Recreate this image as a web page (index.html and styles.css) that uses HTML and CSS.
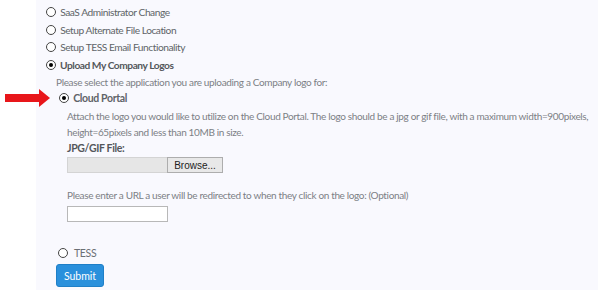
FILE: index.html
```html
<!DOCTYPE html>
<html lang="en">
<head>
    <meta charset="UTF-8">
    <title>Company Logos</title>
    <link rel="stylesheet" href="styles.css">
</head>
<body>
    <div class="panel">
        <ul class="options">
            <li><label><input type="radio" name="task"> SaaS Administrator Change</label></li>
            <li><label><input type="radio" name="task"> Setup Alternate File Location</label></li>
            <li><label><input type="radio" name="task"> Setup TESS Email Functionality</label></li>
            <li class="strong"><label><input type="radio" name="task" checked> Upload My Company Logos</label></li>
        </ul>
        <div class="logos">
            <p class="hint">Please select the application you are uploading a Company logo for:</p>
            <div class="app">
                <span class="arrow"></span>
                <label class="app-label"><input type="radio" name="app" checked> Cloud Portal</label>
            </div>
            <div class="details">
                <p class="text">Attach the logo you would like to utilize on the Cloud Portal. The logo should be a jpg or gif file, with a maximum width=900pixels, height=65pixels and less than 10MB in size.</p>
                <p class="field-title">JPG/GIF File:</p>
                <div class="file">
                    <span class="file-name"></span>
                    <button class="browse">Browse...</button>
                </div>
                <p class="text url-hint">Please enter a URL a user will be redirected to when they click on the logo: (Optional)</p>
                <input type="text" class="url">
            </div>
            <label class="app-label tess"><input type="radio" name="app"> TESS</label>
            <button class="submit">Submit</button>
        </div>
    </div>
</body>
</html>
```

FILE: styles.css
```css
body {
    margin: 0;
    background: #fff;
    font-family: 'Lato', 'Liberation Sans', sans-serif;
    font-size: 10px;
    letter-spacing: -0.35px;
    color: #6b6f74;
}
.panel {
    margin-left: 36px;
    width: 562px;
    height: 290px;
    background: #f9f9fe;
    box-sizing: border-box;
    padding-top: 4px;
}
.options {
    list-style: none;
    margin: 0;
    padding: 0 0 0 10px;
}
.options li {
    height: 17.5px;
    line-height: 17px;
    font-size: 10.2px;
    letter-spacing: -0.45px;
    color: #606468;
}
.options li.strong {
    font-weight: bold;
    color: #54575b;
}
input[type="radio"] {
    appearance: none;
    width: 10px;
    height: 10px;
    margin: 0 2px 0 0;
    border: 1px solid #444;
    border-radius: 50%;
    background: #fff;
    box-sizing: border-box;
    vertical-align: -1px;
    position: relative;
}
input[type="radio"]:checked::after {
    content: '';
    position: absolute;
    left: 2px;
    top: 2px;
    width: 4px;
    height: 4px;
    border-radius: 50%;
    background: #000;
}
.logos {
    padding-left: 20px;
}
.hint {
    margin: 1px 0 0;
    line-height: 14px;
    color: #7c8085;
}
.app {
    position: relative;
    padding-left: 3px;
    height: 18px;
    line-height: 18px;
}
.arrow {
    position: absolute;
    left: -51px;
    top: 0;
    width: 45px;
    height: 18px;
}
.arrow::before {
    content: '';
    position: absolute;
    left: 0;
    top: 5px;
    width: 35px;
    height: 8px;
    background: #e8161a;
}
.arrow::after {
    content: '';
    position: absolute;
    left: 34px;
    top: 0;
    border-left: 11px solid #e8161a;
    border-top: 9px solid transparent;
    border-bottom: 9px solid transparent;
}
.app-label {
    font-size: 10.5px;
    font-weight: bold;
    color: #5f6368;
}
.details {
    padding-left: 11px;
    padding-top: 1px;
}
.text {
    margin: 0;
    line-height: 16px;
    color: #7c8085;
}
.field-title {
    margin: 0;
    font-size: 10.5px;
    line-height: 16px;
    font-weight: bold;
    color: #54575b;
}
.file {
    display: flex;
    margin-top: 1px;
    height: 16px;
}
.file-name {
    width: 100px;
    background: #e6e6e6;
    border: 1px solid #d4d4d4;
    border-right: none;
    box-sizing: border-box;
}
.browse {
    width: 56px;
    height: 16px;
    padding: 0;
    border: 1px solid #adadad;
    background: #e8e8e8;
    font-family: 'Liberation Sans', sans-serif;
    font-size: 10px;
    letter-spacing: 0;
    color: #222;
}
.url-hint {
    margin-top: 14px;
    margin-bottom: 3px;
}
.url {
    display: block;
    width: 101px;
    height: 16px;
    margin: 0;
    border: 1px solid #b8b8b8;
    background: #fff;
    box-sizing: border-box;
}
.tess {
    display: block;
    margin-top: 23px;
    padding-left: 2px;
    font-weight: normal;
    line-height: 16px;
    color: #6b6f74;
}
.tess input {
    margin-right: 4px;
}
.submit {
    display: block;
    margin-top: 3px;
    width: 48px;
    height: 23px;
    padding: 0;
    border: 1px solid #1f7fc7;
    border-radius: 3px;
    background: #2a90dc;
    color: #fff;
    font-family: 'Lato', sans-serif;
    font-size: 10.5px;
    letter-spacing: 0;
}
```
